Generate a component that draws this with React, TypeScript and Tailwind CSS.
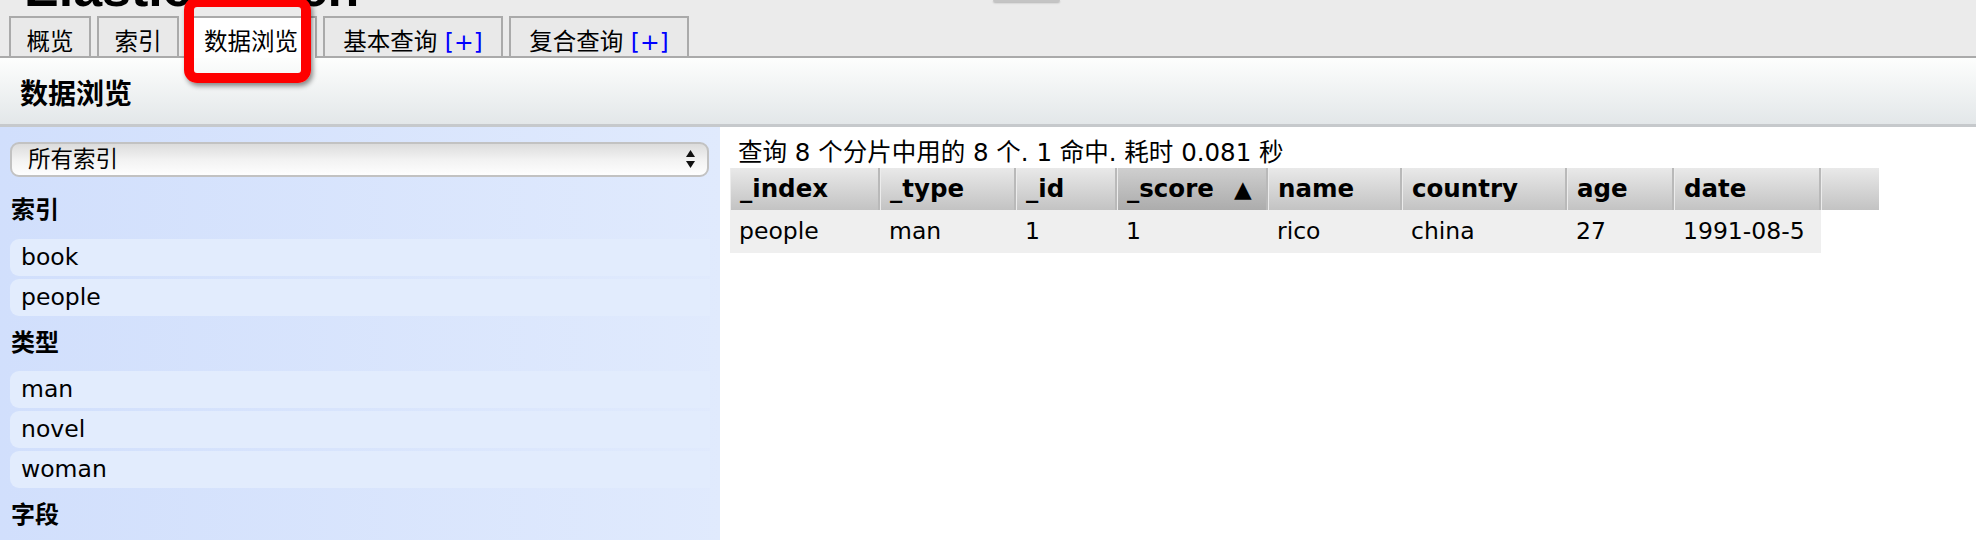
import React from "react";

const cols = [
  { name: "_index", w: "w-[150px]", val: "people", sorted: false },
  { name: "_type", w: "w-[136px]", val: "man", sorted: false },
  { name: "_id", w: "w-[101px]", val: "1", sorted: false },
  { name: "_score", w: "w-[151px]", val: "1", sorted: true },
  { name: "name", w: "w-[134px]", val: "rico", sorted: false },
  { name: "country", w: "w-[165px]", val: "china", sorted: false },
  { name: "age", w: "w-[107px]", val: "27", sorted: false },
  { name: "date", w: "w-[147px]", val: "1991-08-5", sorted: false },
];

function Tab({ label, w, active, plus }: { label: string; w: string; active?: boolean; plus?: boolean }) {
  return (
    <div
      className={`${w} shrink-0 border-t-2 border-x-2 border-[#aaaaaa] text-center whitespace-nowrap leading-[28px] pt-[10px] text-[23.5px] ${
        active ? "relative z-10 h-[42px] bg-white -mb-[2px]" : "h-[40px] bg-[#e9e9e9]"
      }`}
    >
      {label}
      {plus && <span className="text-[#0000ff]"> [+]</span>}
    </div>
  );
}

function Item({ text }: { text: string }) {
  return (
    <div className="h-[37px] mb-[3px] rounded-l-[9px] bg-[#e2ecfd] pl-[11px] flex items-center text-[23.5px] leading-none">
      {text}
    </div>
  );
}

function Heading({ text, cls }: { text: string; cls: string }) {
  return <div className={`font-bold text-[24px] leading-[30px] pl-[1px] ${cls}`}>{text}</div>;
}

export default function App() {
  return (
    <div className="relative w-[1976px] h-[540px] overflow-hidden bg-white text-black font-['DejaVu_Sans','Noto_Sans_CJK_SC',sans-serif]">
      {/* top header */}
      <div className="relative h-[58px] bg-[#ebebeb] border-b-2 border-[#aaaaaa]">
        <div className="h-[16px] overflow-hidden pl-[24px]">
          <div className="-mt-[38px] text-[52px] leading-[52px] font-bold font-['Liberation_Sans',sans-serif]">
            Elasticsearch
          </div>
        </div>
        <div className="absolute left-[993px] top-0 w-[67px] h-[2px] rounded-b-[3px] bg-[#c4c4c4] shadow-[0_1px_2px_rgba(0,0,0,0.25)]" />
        <div className="flex items-start gap-[6px] pl-[9px] h-[40px]">
          <Tab label="概览" w="w-[82px]" />
          <Tab label="索引" w="w-[82px]" />
          <Tab label="数据浏览" w="w-[132px]" active />
          <Tab label="基本查询" w="w-[180px]" plus />
          <Tab label="复合查询" w="w-[180px]" plus />
        </div>
      </div>

      {/* sub header */}
      <div className="h-[69px] border-b-[3px] border-[#c6c9cc] bg-linear-to-b from-[#fdfefd] to-[#e3e7e9] flex items-center pl-[20px] pt-[7px]">
        <div className="font-bold text-[28px] leading-none">数据浏览</div>
      </div>

      {/* body */}
      <div className="flex h-[413px]">
        <div className="w-[720px] shrink-0 bg-linear-to-r from-[#d1dffc] to-[#e0eafd] pl-[10px] pr-[10px] pt-[15px]">
          <div className="h-[35px] w-[699px] rounded-[9px] border-2 border-[#c2c2c2] bg-linear-to-b from-[#dcdcdc] via-[#f2f2f2] to-[#fefefe] flex items-center justify-between pl-[16px] pr-[12px]">
            <span className="text-[22.5px] leading-none">所有索引</span>
            <svg width="9" height="19" viewBox="0 0 9 19" className="block">
              <polygon points="4.5,0 9,7 0,7" fill="#111" />
              <polygon points="0,11 9,11 4.5,18" fill="#111" />
            </svg>
          </div>
          <Heading text="索引" cls="mt-[18px] mb-[14px]" />
          <Item text="book" />
          <Item text="people" />
          <Heading text="类型" cls="mt-[12px] mb-[13px]" />
          <Item text="man" />
          <Item text="novel" />
          <Item text="woman" />
          <Heading text="字段" cls="mt-[12px]" />
        </div>

        <div className="flex-1 pl-[10px]">
          <div className="pt-[10px] h-[41px] leading-[31px] text-[24.5px] pl-[8px] whitespace-nowrap">
            查询 8 个分片中用的 8 个. 1 命中. 耗时 0.081 秒
          </div>
          <div className="flex h-[42px]">
            {cols.map((c) => (
              <div
                key={c.name}
                className={`${c.w} shrink-0 h-full flex items-center pl-[9px] font-bold text-[24.5px] leading-none whitespace-nowrap border-l border-l-[#ececec] border-r-2 border-r-[#b9b9b9] ${
                  c.sorted
                    ? "bg-linear-to-b from-[#cfcfcf] to-[#acacac]"
                    : "bg-linear-to-b from-[#e9e9e9] to-[#c3c3c3]"
                }`}
              >
                {c.name}
                {c.sorted && <span className="ml-[20px] text-[23px]">▲</span>}
              </div>
            ))}
            <div className="w-[58px] shrink-0 h-full border-l border-l-[#ececec] bg-linear-to-b from-[#e9e9e9] to-[#c3c3c3]" />
          </div>
          <div className="flex h-[43px] w-[1091px] bg-[#efefef]">
            {cols.map((c) => (
              <div key={c.name} className={`${c.w} shrink-0 h-full flex items-center pl-[9px] text-[23.5px] leading-none whitespace-nowrap`}>
                {c.val}
              </div>
            ))}
          </div>
        </div>
      </div>

      {/* red annotation box */}
      <div className="absolute left-[184px] top-[-3px] w-[127px] h-[86px] rounded-[13px] border-[10px] border-[#fe0000] shadow-[2px_3px_5px_rgba(0,0,0,0.45)] z-20" />
    </div>
  );
}
